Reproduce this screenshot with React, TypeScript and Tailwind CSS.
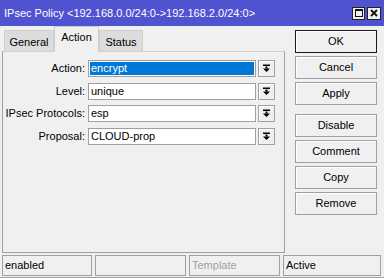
import React from "react";

// MikroTik-style "IPsec Policy" edit window, Action tab selected.

const fields = [
  { label: "Action:", value: "encrypt", selected: true },
  { label: "Level:", value: "unique" },
  { label: "IPsec Protocols:", value: "esp" },
  { label: "Proposal:", value: "CLOUD-prop" },
];

function DropArrow() {
  return (
    <svg width="9" height="9" viewBox="0 0 9 9" className="block">
      <rect x="1" y="0.5" width="7" height="1.5" fill="#000" />
      <rect x="3.5" y="2.5" width="2" height="2" fill="#000" />
      <path d="M1 4.5 H8 L4.5 8 Z" fill="#000" />
    </svg>
  );
}

function Field({
  label,
  value,
  selected,
}: {
  label: string;
  value: string;
  selected?: boolean;
}) {
  return (
    <div className="flex h-[17px] items-center">
      <div className="w-[85px] whitespace-nowrap pr-[3px] text-right">{label}</div>
      <div className="flex h-[17px] w-[168px] items-center border border-[#a0a0a0] bg-white px-[1px]">
        <span
          className={
            selected
              ? "flex h-[13px] w-full items-center bg-[#0078d7] px-[1px] text-white"
              : "px-[1px]"
          }
        >
          {value}
        </span>
      </div>
      <div className="ml-[2px] flex h-[17px] w-[17px] items-center justify-center border border-[#a0a0a0] bg-[#f0f0f0] shadow-[inset_1px_1px_0_#fff]">
        <DropArrow />
      </div>
    </div>
  );
}

function Button({ label, primary }: { label: string; primary?: boolean }) {
  return (
    <button
      className={
        "flex h-[23px] w-[82px] items-center justify-center border bg-[#f0f0f0] shadow-[inset_1px_1px_0_#fff] " +
        (primary ? "border-[#1a1a1a]" : "border-[#a0a0a0]")
      }
    >
      {label}
    </button>
  );
}

function Tab({ label, width, active }: { label: string; width: string; active?: boolean }) {
  return active ? (
    <div
      className={
        "relative z-10 -mb-px flex h-[26px] items-start justify-center border border-b-0 border-[#cfcfcf] bg-[#f0f0f0] pt-[5px] " +
        width
      }
    >
      {label}
    </div>
  ) : (
    <div
      className={
        "flex h-[21px] items-center justify-center border border-b-0 border-[#cfcfcf] bg-[#dcdcdc] pt-[3px] " +
        width
      }
    >
      {label}
    </div>
  );
}

function StatusCell({ text, width, muted }: { text?: string; width: string; muted?: boolean }) {
  return (
    <div
      className={
        "flex h-[21px] items-center border border-[#a0a0a0] px-[2px] " +
        width +
        (muted ? " text-[#a0a0a0]" : "")
      }
    >
      {text}
    </div>
  );
}

export default function App() {
  return (
    <div className="flex h-[278px] w-[388px] flex-col overflow-hidden border-r-[4px] border-white bg-[#f0f0f0] font-['Liberation_Sans',Arial,sans-serif] text-[11px] leading-none text-black">
      {/* title bar */}
      <div className="flex h-[26px] shrink-0 items-center justify-between bg-[#5053cf] pl-[4px] pr-[3px] text-white">
        <span className="text-[11px]">
          IPsec Policy &lt;192.168.0.0/24:0-&gt;192.168.2.0/24:0&gt;
        </span>
        <div className="flex gap-[2px]">
          <div className="flex h-[13px] w-[13px] items-center justify-center border border-[#222] bg-[#f0f0f0]">
            <div className="h-[8px] w-[8px] border border-[#111] border-t-2" />
          </div>
          <div className="flex h-[13px] w-[14px] items-center justify-center border border-[#222] bg-[#f0f0f0]">
            <svg width="8" height="8" viewBox="0 0 8 8">
              <path d="M1 1 L7 7 M7 1 L1 7" stroke="#111" strokeWidth="1.8" />
            </svg>
          </div>
        </div>
      </div>

      <div className="flex h-[228px] shrink-0">
        {/* tabs + panel */}
        <div className="ml-[2px] flex w-[283px] flex-col">
          <div className="flex h-[25px] items-end pl-[2px]">
            <Tab label="General" width="w-[50px]" />
            <Tab label="Action" width="w-[45px]" active />
            <Tab label="Status" width="w-[44px]" />
          </div>
          <div className="flex h-[202px] flex-col gap-[5.5px] border border-[#a0a0a0] border-t-[#cfcfcf] pt-[8px]">
            {fields.map((f) => (
              <Field key={f.label} {...f} />
            ))}
          </div>
        </div>

        {/* buttons */}
        <div className="ml-[10px] flex flex-col pt-[4px]">
          <div className="flex flex-col gap-[3px]">
            <Button label="OK" primary />
            <Button label="Cancel" />
            <Button label="Apply" />
          </div>
          <div className="mt-[9px] flex flex-col gap-[3px]">
            <Button label="Disable" />
            <Button label="Comment" />
            <Button label="Copy" />
            <Button label="Remove" />
          </div>
        </div>
      </div>

      {/* status bar */}
      <div className="flex h-[24px] shrink-0 gap-[3px] border-b border-[#a0a0a0] pl-[2px] pt-[1px]">
        <StatusCell text="enabled" width="w-[90px]" />
        <StatusCell width="w-[91px]" />
        <StatusCell text="Template" width="w-[91px]" muted />
        <StatusCell text="Active" width="w-[98px]" />
      </div>
    </div>
  );
}
